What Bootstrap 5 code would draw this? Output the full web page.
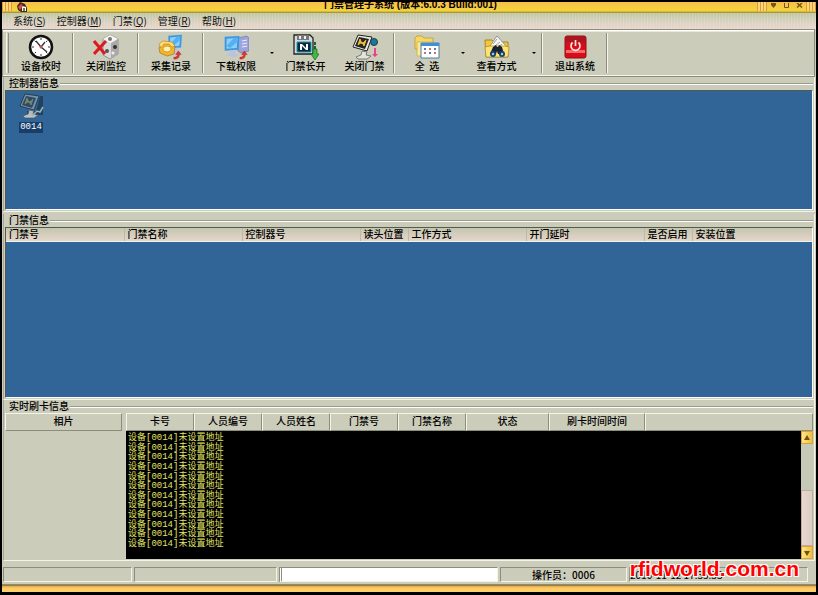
<!DOCTYPE html>
<html lang="zh-CN">
<head>
<meta charset="utf-8">
<meta name="viewport" content="width=device-width, initial-scale=1">
<title>门禁管理子系统</title>
<link href="https://cdn.jsdelivr.net/npm/bootstrap@5.3.0/dist/css/bootstrap.min.css" rel="stylesheet">
<style>
:root { --face: #cbccba; --shade: #8b8e7d; --lite: #f4f4ea; --pane: #316598; }
body { background: #000; color: #000; font: 10px/12px "Noto Sans CJK SC", sans-serif; padding: 2px 2px 3px; }
button { font: inherit; color: inherit; }
.window { background: var(--face); }

.titlebar { height: 11px; background: linear-gradient(#fbbd4c, #f1d53c 80%, #9f8228); overflow: hidden; }
.titlebar h1 { font: bold 10px/12px "Liberation Sans", "Noto Sans CJK SC", sans-serif; margin: -3px 0 0; padding-left: 36px; }
.grip { width: 10px; height: 9px; background: repeating-linear-gradient(90deg, #dd9a35 0 1px, #fbd67e 1px 3px); }
.titlebar svg { display: block; }
.winbtn { width: 13px; height: 10px; padding: 0; border: 0; background: none; }

.menus { height: 16px; padding-left: 11px; gap: 11px; background: repeating-linear-gradient(90deg, #fff2 0 1px, #0000 1px 3px), linear-gradient(#bfc7a6, #d5d0bd 45%, #ead7cd); }
.menus a { color: #111; text-decoration: none; line-height: 15px; }

.tools { height: 48px; border: 1px solid var(--shade); box-shadow: inset 1px 2px 0 -1px #fff, inset 0 2px 0 #e9e9dd, inset 0 -1px 0 #f4f4ea; margin-right: 1px; padding: 3px 0 3px 3px; }
.handle { width: 3px; border-left: 1px solid var(--lite); border-right: 1px solid var(--shade); }
.tool { width: 64px; padding: 0; border: 0; background: none; }
.tool.slim { width: 59px; }
.tool svg { width: 26px; height: 26px; display: block; margin: 0 auto; }
.tool span { display: block; line-height: 12px; font-weight: 500; white-space: pre; }
.more { width: 8px; border: 0; padding: 0; background: none; }
.more::before { content: ""; display: block; margin: 0 auto; width: 4px; border: 2px solid #0000; border-top-color: #000; border-bottom: 0; }
.rule { width: 2px; margin-left: -1px; border-left: 1px solid var(--shade); border-right: 1px solid var(--lite); }

.group { margin: 0 1px; padding: 0 1px 1px; border: 1px solid var(--lite); border-top: 0; border-left-color: #a4a697; }
.group-doors { margin-top: 2px; }
.caption { height: 13px; padding-left: 4px; font-weight: 500; }
.caption h2 { font: inherit; line-height: 13px; margin: 0 1px 2px 0; }
.caption::after { content: ""; flex: 1; height: 2px; background: linear-gradient(#989b89 50%, #fff 50%); }
.sunken { border: 1px solid #555a4e; border-right-color: #fff; border-bottom-color: #fff; background: var(--pane); }
.devices { height: 120px; padding: 2px 0 0 9px; }
.device { width: 32px; padding: 0; border: 0; background: none; }
.device svg { width: 26px; height: 26px; display: block; margin: 0 auto; }
.device span { display: inline-block; background: #173e68; color: #fff; font: 9px/11px "Liberation Mono", monospace; margin-top: 2px; padding: 0 1px; }

.grid-head { table-layout: fixed; width: 100%; border-collapse: collapse; }
.grid-head th { height: 13px; padding: 0 0 0 3px; font-weight: 500; line-height: 12px; white-space: nowrap; border-bottom: 1px solid #edf4f4; border-right: 1px solid #bdb9a9; background: linear-gradient(#c3c6af, #e5d5ca); }
.grid-head th:last-child { border-right: 0; }
.w-long { width: 118px; }
.w-short { width: 48px; }

.photo { width: 117px; }
.live-head { table-layout: fixed; width: 100%; border-collapse: separate; border-spacing: 0; }
.live-head th, .photo-head { height: 18px; padding: 0 0 2px; text-align: center; font-weight: 500; line-height: 14px; border: 1px solid var(--shade); border-top-color: var(--lite); border-left-color: var(--lite); background: var(--face); }
.w-col { width: 68px; }
.w-state { width: 83px; }
.w-time { width: 96px; }
.console { height: 128px; background: #000; }
.log { color: #e1e469; font: 9px/9px "Liberation Mono", "Noto Sans CJK SC", monospace; list-style: none; margin: 0; padding: 3px 0 0 2px; height: 118px; }
.bar { width: 12px; background: #c6c8b8; }
.bar button { height: 13px; padding: 0; border: 1px solid #d6a52e; background: linear-gradient(90deg, #ffe688, #eebd43); }
.bar svg { display: block; margin: auto; }
.thumb { height: 56px; border: 1px solid #c6aaa2; background: linear-gradient(90deg, #e9d6d0, #d8cfc2); }

.status { height: 24px; padding: 6px 8px 2px 1px; gap: 2px; border-bottom: 1px solid var(--shade); }
.cell { border: 1px solid var(--shade); border-right-color: var(--lite); border-bottom-color: var(--lite); line-height: 13px; white-space: nowrap; }
.cell-a { width: 129px; }
.cell-b { width: 143px; }
.cell-c { width: 219px; border-left: 3px double var(--shade); background: #fff; padding: 0; border-radius: 0; }
.cell-d { width: 127px; }
.footbar { height: 7px; border-top: 1px solid #a07c32; background: linear-gradient(#e5a944, #ffce68 40%); }
.watermark { right: 19px; bottom: 14px; color: #f00; font: bold 21px/24px "Liberation Sans", sans-serif; text-shadow: 1px 1px #fff, -1px 1px #fff, 1px -1px #fff, -1px -1px #fff; }
</style>
</head>
<body class="min-vh-100 d-flex flex-column position-relative">
<svg class="d-none">
  <symbol id="pc" viewBox="0 0 26 26">
    <path d="M4 2 20 1l-1 15-15 1z" fill="#3c97e0"/><path d="m6 4 12-1-1 11-11 1z" fill="#8cd0fb"/><path d="m6 12 8-9 4 0-1 5-7 6z" fill="#54b1f2"/>
    <path d="m9 17 6-1 1 4 4 2-6 2-9-2 4-2z" fill="#b9c3df"/>
  </symbol>
  <symbol id="swoop" viewBox="0 0 10 10"><path d="M1 9c5 0 6-2 6-5h2L6 0 3 4h2c0 2-1 3-4 3z" fill="#e3342c" stroke="#aa1a1a" stroke-width=".5"/></symbol>
  <symbol id="console-pc" viewBox="0 0 26 26">
    <path d="m7 1 14 2-5 14L2 13z" fill="#e7e8e2" stroke="#222"/><path d="m8 3 10 2-4 10-10-3z" fill="#252525"/>
    <path d="M7 11 9 5l2 5 4-4-2 6-2-4z" fill="#eec237" stroke="#eec237"/><path d="m11 17 5 1-1 3 5 1-4 3H7l-2-2 5-2z" fill="#e4e4dd" stroke="#555" stroke-width=".7"/>
  </symbol>
</svg>

<main class="window flex-grow-1 d-flex flex-column">
  <header class="titlebar d-flex">
    <span class="grip me-1"></span>
    <svg width="12" height="10" viewBox="0 0 12 10" aria-hidden="true"><path d="M1 4 4 0l5 2 2 4v4H5L2 8z" fill="#472822"/><path d="m6 4 4 1v4H6z" fill="#fff"/><path d="m2 5 3-3 2 2-3 4z" fill="#d4504c"/><path d="M7 6h2v3H7z" fill="#774"/></svg>
    <h1 class="flex-grow-1 text-center">门禁管理子系统 (版本:6.0.3 Build:001)</h1>
    <span class="grip"></span>
    <button class="winbtn" aria-label="最小化"><svg width="13" height="8" viewBox="0 0 13 8"><path d="M4 0h5v2L6.500 5 4 2z" fill="#75551d"/></svg></button>
    <button class="winbtn" aria-label="最大化"><svg width="13" height="8" viewBox="0 0 13 8"><path d="M4.500 0v4.500h4V0" fill="none" stroke="#75551d"/></svg></button>
    <button class="winbtn" aria-label="关闭"><svg width="13" height="8" viewBox="0 0 13 8"><path d="m4 0 5 4.500M9 0 4 4.500" fill="none" stroke="#75551d" stroke-width="1.500"/></svg></button>
    <span class="grip"></span>
  </header>

  <nav class="menus d-flex" aria-label="主菜单">
    <a href="#">系统(<u>S</u>)</a>
    <a href="#">控制器(<u>M</u>)</a>
    <a href="#">门禁(<u>Q</u>)</a>
    <a href="#">管理(<u>R</u>)</a>
    <a href="#">帮助(<u>H</u>)</a>
  </nav>

  <div class="tools d-flex" role="toolbar">
    <span class="handle"></span>
    <button class="tool"><svg viewBox="0 0 26 26"><circle cx="13" cy="13" r="11" fill="#fff" stroke="#111" stroke-width="2.500"/><path d="M13 4v2M13 20v2M4 13h2M20 13h2M6.600 6.600 8 8M18 18l1.400 1.400M19.400 6.600 18 8M8 18l-1.400 1.400" stroke="#333"/><path d="m8 7 5 6 6 5M13 13l4-5" fill="none" stroke="#333" stroke-width="1.300"/><circle cx="13" cy="13" r="1.500" fill="#b55"/></svg><span>设备校时</span></button>
    <i class="rule"></i>
    <button class="tool"><svg viewBox="0 0 26 26"><path d="m10 5 7-4 8 4v15l-8 5-7-4z" fill="#d9d9d7" stroke="#777" stroke-width=".7"/><path d="m10 5 8 4 7-4-8-4z" fill="#f6f6f4"/><path d="m18 9 7-4v15l-7 5z" fill="#aaaba9"/><circle cx="17" cy="5" r="2" fill="#777"/><circle cx="22" cy="13" r="2" fill="#333"/><circle cx="20" cy="19" r="1.500" fill="#eee"/><circle cx="14" cy="17" r="2" fill="#555"/><path d="m1 7 11 13M13 7 1 20" fill="none" stroke="#dc1b20" stroke-width="3"/></svg><span>关闭监控</span></button>
    <i class="rule"></i>
    <button class="tool"><svg viewBox="0 0 26 26"><use href="#pc" x="7" y="-1" width="22" height="24"/><path d="m1 14 3-5 8-1 5 4-1 8-7 2-7-3z" fill="#f2b62c" stroke="#ae7314" stroke-width=".7"/><path d="m1 10 4-3 9 1 3 4-3 1-3-3-5 0-3 4z" fill="#ffde6d" stroke="#bb7d18" stroke-width=".6"/><ellipse cx="9" cy="15" rx="4" ry="3" fill="#fff0ab" stroke="#b87916" stroke-width=".6"/><use href="#swoop" x="15" y="17" width="9" height="9"/></svg><span>采集记录</span></button>
    <i class="rule"></i>
    <button class="tool"><svg viewBox="0 0 26 26"><path d="m15 4 9-2 2 2v13l-8 2-3-2z" fill="#9ba5db" stroke="#6870a5" stroke-width=".6"/><path d="m19 7 5-1M19 10l5-1M19 13l5-1" stroke="#eef"/><use href="#pc" x="-2" y="1" width="24" height="24"/><use href="#swoop" x="16" y="17" width="9" height="9"/></svg><span>下载权限</span></button>
    <button class="more" aria-label="下载权限选项"></button>
    <button class="tool slim"><svg viewBox="0 0 26 26"><path d="M1 1h16l3 3v16H1z" fill="#d8dad6" stroke="#222" stroke-width="1.300"/><path d="M4 1h12v5H4z" fill="#777"/><path d="M6 2h2v3H6zM11 2h2v3h-2z" fill="#eee"/><path d="M4 8h14v10H4z" fill="#0b273c" stroke="#189fc2"/><path d="M7 16v-6h2l4 4v-4h2v6h-2l-4-4v4z" fill="#fff"/><path d="M21 8h2v3h-2zM21 12h2v3h-2z" fill="#285f2d"/><path d="M20 15h4v5h2l-4 6-4-6h2z" fill="#42b942" stroke="#126a20" stroke-width=".7"/></svg><span>门禁长开</span></button>
    <button class="tool slim"><svg viewBox="0 0 26 26"><use href="#console-pc" x="-1" width="26" height="26"/><circle cx="22" cy="8" r="3.500" fill="#227694" stroke="#134154"/><path d="M22 14h2v6h2l-3 3-3-3h2z" fill="#e7428b"/></svg><span>关闭门禁</span></button>
    <i class="rule"></i>
    <button class="tool"><svg viewBox="0 0 26 26"><path d="M1 4 3 2h5l2 2h9v11H1z" fill="#f5d765" stroke="#b7922d" stroke-width=".7"/><path d="M3 8h16v14H3z" fill="#fbe998" stroke="#c9a842" stroke-width=".7"/><path d="M7 9h18v15H7z" fill="#fff" stroke="#4b7cad"/><path d="M7 9h18v3H7z" fill="#3d90dd"/><path d="M10 14h2v2h-2zM20 14h2v2h-2zM15 18h2v2h-2z" fill="#5b78b4"/><path d="M15 14h2v2h-2zM10 18h2v2h-2zM20 18h2v2h-2z" fill="#d2735d"/></svg><span>全  选</span></button>
    <button class="more" aria-label="全选选项"></button>
    <button class="tool slim"><svg viewBox="0 0 26 26"><path d="M1 6h7l2 2h14v15H2z" fill="#f3c933" stroke="#94741d" stroke-width=".8"/><path d="m6 12 7-10 9 10v6H6z" fill="#f7f7f3" stroke="#777" stroke-width=".7"/><path d="m9 10 4-5M11 12l5-4M14 13l4-3" stroke="#999"/><path d="M2 23 1 13l5-1h15l4 1-1 10z" fill="#ffe374" stroke="#a8862a" stroke-width=".7"/><path d="m9 13 3-2 1 2h1l1-2 3 2 2 7h-6l-1-3-1 3H6z" fill="#182233"/><circle cx="9" cy="20" r="3" fill="#1a3f70"/><circle cx="18" cy="20" r="3" fill="#1a3f70"/><circle cx="9" cy="20" r="1.200" fill="#8dd"/><circle cx="18" cy="20" r="1.200" fill="#8dd"/></svg><span>查看方式</span></button>
    <button class="more ms-1 me-1" aria-label="查看方式选项"></button>
    <i class="rule"></i>
    <button class="tool"><svg viewBox="0 0 26 26"><rect x="3" y="2" width="21" height="22" rx="2" fill="#d80d1a" stroke="#8e1018"/><path d="M4 3h19v5H4z" fill="#a81820"/><path d="M4 16h19v3H4z" fill="#f9686a"/><path d="M10.500 8.500a4.500 4.500 0 1 0 6 0M13.500 6v6" fill="none" stroke="#ffe3df" stroke-width="1.700"/></svg><span>退出系统</span></button>
    <i class="rule"></i>
  </div>

  <section class="group">
    <div class="caption d-flex align-items-center"><h2>控制器信息</h2></div>
    <div class="sunken devices">
      <button class="device text-center"><svg viewBox="0 0 26 26"><path d="M22 3h3v19H9v-4h9z" fill="#20425f"/><g opacity=".75"><use href="#console-pc" width="26" height="26"/></g><path d="m7 1 14 2-5 14L2 13z" fill="#315f88" opacity=".5"/><path d="m14 23 5-5 3 1 3-5" fill="none" stroke="#9db4b4" stroke-width="1.500"/></svg><span>0014</span></button>
    </div>
  </section>

  <section class="group group-doors flex-grow-1 d-flex flex-column">
    <div class="caption d-flex align-items-center"><h2>门禁信息</h2></div>
    <div class="sunken flex-grow-1">
      <table class="grid-head">
        <colgroup><col class="w-long"><col class="w-long"><col class="w-long"><col class="w-short"><col class="w-long"><col class="w-long"><col class="w-short"><col></colgroup>
        <thead><tr><th>门禁号</th><th>门禁名称</th><th>控制器号</th><th>读头位置</th><th>工作方式</th><th>开门延时</th><th>是否启用</th><th>安装位置</th></tr></thead>
      </table>
    </div>
  </section>

  <section class="group">
    <div class="caption d-flex align-items-center"><h2>实时刷卡信息</h2></div>
    <div class="d-flex">
      <div class="photo flex-shrink-0"><div class="photo-head">相片</div></div>
      <div class="flex-grow-1 ms-1">
        <table class="live-head">
          <colgroup><col class="w-col"><col class="w-col"><col class="w-col"><col class="w-col"><col class="w-col"><col class="w-state"><col class="w-time"><col></colgroup>
          <thead><tr><th>卡号</th><th>人员编号</th><th>人员姓名</th><th>门禁号</th><th>门禁名称</th><th>状态</th><th>刷卡时间时间</th><th></th></tr></thead>
        </table>
        <div class="console d-flex justify-content-between">
          <ul class="log d-flex flex-column justify-content-between">
            <li>设备[0014]未设置地址</li><li>设备[0014]未设置地址</li><li>设备[0014]未设置地址</li><li>设备[0014]未设置地址</li>
            <li>设备[0014]未设置地址</li><li>设备[0014]未设置地址</li><li>设备[0014]未设置地址</li><li>设备[0014]未设置地址</li>
            <li>设备[0014]未设置地址</li><li>设备[0014]未设置地址</li><li>设备[0014]未设置地址</li><li>设备[0014]未设置地址</li>
          </ul>
          <div class="bar d-flex flex-column">
            <button aria-label="向上滚动"><svg width="8" height="6" viewBox="0 0 8 6"><path d="M4 0 7 5H1z" fill="#6f5312"/></svg></button>
            <div class="thumb mt-auto"></div>
            <button aria-label="向下滚动"><svg width="8" height="6" viewBox="0 0 8 6"><path d="M4 6 7 1H1z" fill="#6f5312"/></svg></button>
          </div>
        </div>
      </div>
    </div>
  </section>

  <footer>
    <div class="status d-flex">
      <div class="cell cell-a"></div>
      <div class="cell cell-b"></div>
      <input class="cell cell-c" type="text" aria-label="状态信息" readonly>
      <div class="cell cell-d text-center fw-medium">操作员：0006</div>
      <div class="cell flex-grow-1">2010-11-12 17:35:33</div>
    </div>
    <div class="footbar"></div>
  </footer>
</main>
<div class="watermark position-absolute">rfidworld.com.cn</div>
<script src="https://cdn.jsdelivr.net/npm/bootstrap@5.3.0/dist/js/bootstrap.bundle.min.js"></script>
</body>
</html>
